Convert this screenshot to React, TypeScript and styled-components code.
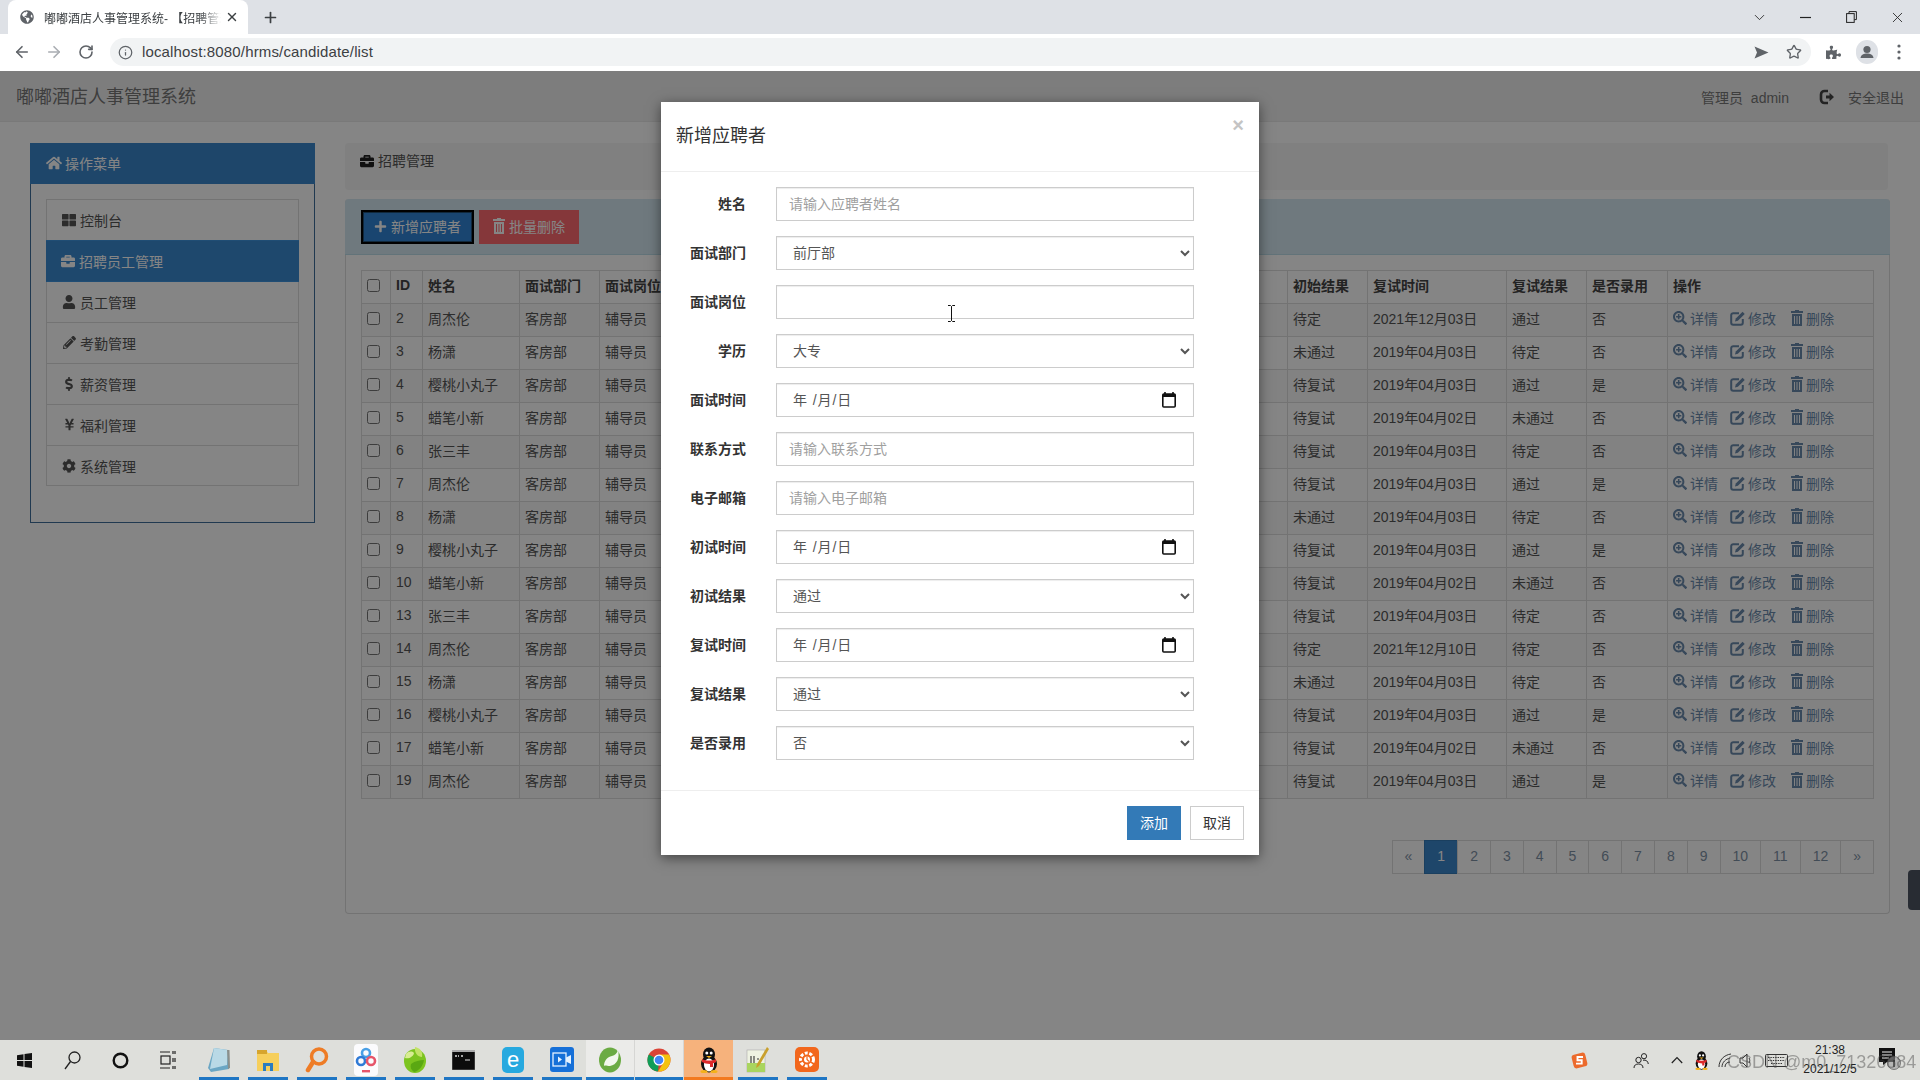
import React from "react";
import styled, { createGlobalStyle } from "styled-components";
import { ArrowLeft, ArrowRight, RotateCw, Info, Star, Plus, X, ChevronDown } from "lucide-react";
import {
  FaHome, FaThLarge, FaBriefcase, FaUser, FaPencilAlt, FaDollarSign, FaYenSign, FaCog,
  FaPlus, FaSearchPlus, FaPuzzlePiece, FaGlobeAmericas,
} from "react-icons/fa";

const FONT = `"Liberation Sans", "Noto Sans CJK SC", sans-serif`;

const Global = createGlobalStyle`
  html, body { margin: 0; padding: 0; width: 1920px; height: 1080px; overflow: hidden; }
  body { font-family: ${FONT}; font-size: 14px; color: #333; background: #fff; }
  * { box-sizing: border-box; }
`;

const Shell = styled.div`
  width: 1920px; height: 1080px; display: flex; flex-direction: column;
`;

/* ---------- browser chrome ---------- */
const TabStrip = styled.div`
  height: 34px; background: #dee1e6; display: flex; align-items: stretch; padding-left: 8px; flex: none;
`;
const Tab = styled.div`
  width: 240px; background: #fff; border-radius: 8px 8px 0 0; display: flex; align-items: center;
  padding: 0 9px 0 12px; color: #3c4043; font-size: 12px;
`;
const TabTitle = styled.span`
  flex: 1; margin-left: 10px; white-space: nowrap; overflow: hidden;
  -webkit-mask-image: linear-gradient(90deg, #000 86%, transparent 98%);
  mask-image: linear-gradient(90deg, #000 86%, transparent 98%);
`;
const NewTab = styled.div`
  width: 44px; display: flex; align-items: center; justify-content: center; color: #3c4043;
`;
const WindowButtons = styled.div`
  margin-left: auto; display: flex; align-items: center; color: #222;
`;
const WindowButton = styled.div`
  width: 46px; height: 28px; display: flex; align-items: center; justify-content: center;
`;
const Toolbar = styled.div`
  height: 37px; background: #fff; display: flex; align-items: center; padding: 0 0 1px 6px; flex: none;
`;
const NavButton = styled.div<{ $off?: boolean }>`
  width: 32px; height: 28px; display: flex; align-items: center; justify-content: center;
  color: ${(p) => (p.$off ? "#a9adb2" : "#5f6368")};
`;
const Omnibox = styled.div`
  width: 1701px; height: 28px; margin-left: 8px; border-radius: 14px; background: #f1f3f4;
  display: flex; align-items: center; padding: 0 9px 0 8px; color: #5f6368;
`;
const Url = styled.span`
  margin: -2px 0 0 9px; font-size: 15px; color: #3c4043; letter-spacing: 0.15px;
`;
const OmniActions = styled.div`
  margin-left: auto; display: flex; align-items: center; gap: 17px;
`;
const ExtActions = styled.div`
  margin-left: 15px; display: flex; align-items: center; gap: 15px; color: #5f6368;
`;
const MenuDots = styled.span`
  display: flex; margin-left: 4px;
`;

/* ---------- page ---------- */
const Stage = styled.div`
  flex: 1; position: relative; overflow: hidden; background: #fff; min-height: 0;
`;
const Navbar = styled.div`
  height: 51px; background: #f0f0f0; border-bottom: 1px solid #e8e8e8; display: flex; align-items: center;
  padding: 0 16px 0 16px; color: #666;
`;
const Brand = styled.div`
  font-size: 18px; color: #777; margin-top: -2px;
`;
const NavRight = styled.div`
  margin-left: auto; display: flex; align-items: center; font-size: 14px; color: #777; padding-top: 1px;
`;
const Logout = styled.span`
  margin-left: 30px; margin-right: 13px; display: flex;
`;
const Content = styled.div`
  display: flex; gap: 30px; padding: 21px 30px 0;
`;
const SidePanel = styled.div`
  width: 285px; height: 380px; border: 1px solid #3f6d99; flex: none;
`;
const SideHeading = styled.div`
  height: 41px; margin: -1px -1px 0; background: #3a86cc; color: #fff; display: flex; align-items: center;
  padding: 0 15px 2px 16px; gap: 3px;
`;
const SideBody = styled.div`
  padding: 15px;
`;
const MenuList = styled.div`
  border: 1px solid #ddd; border-top: none; border-bottom: none;
`;
const MenuItem = styled.div<{ $active?: boolean }>`
  padding: 0 15px; display: flex; align-items: center; gap: 4px;
  border-top: 1px solid ${(p) => (p.$active ? "#3f95de" : "#ddd")};
  border-bottom: 1px solid ${(p) => (p.$active ? "#3f95de" : "transparent")};
  margin: ${(p) => (p.$active ? "0 -1px -1px" : "0")};
  height: ${(p) => (p.$active ? "42px" : "41px")};
  position: ${(p) => (p.$active ? "relative" : "static")};
  background: ${(p) => (p.$active ? "#3a8ad2" : "#fff")};
  color: ${(p) => (p.$active ? "#fff" : "#555")};
  &:last-child { border-bottom: 1px solid #ddd; }
`;
const MenuGlyph = styled.span`
  width: 14px; display: flex; justify-content: center; flex: none;
`;
const Main = styled.div`
  width: 1545px; flex: none;
`;
const Crumb = styled.div`
  height: 47px; padding: 8px 15px 0; background: #f6f6f6; border-radius: 4px; margin-right: 2px; margin-bottom: 9px;
  display: flex; align-items: flex-start; gap: 4px; color: #555; line-height: 20px;
`;
const CrumbIcon = styled.span`
  display: flex; height: 20px; align-items: center;
`;
const Panel = styled.div`
  height: 715px; border: 1px solid #ddd; border-top: none; border-radius: 4px; background: #fff;
`;
const PanelHead = styled.div`
  height: 56px; margin: 0 -1px; background: #d5e8f1; border-bottom: 1px solid #bcdde8; border-radius: 4px 4px 0 0;
  display: flex; gap: 5px; padding: 11px 15px 0 16px;
`;
const PrimaryButton = styled.div`
  width: 113px; height: 34px; background: #3184d6; color: #fff; border: 1px solid #dce8f0; outline: 2px solid #000; outline-offset: -2px;
  display: flex; align-items: center; justify-content: center; gap: 4px; box-shadow: inset 0 0 0 2px #204d74; padding-bottom: 2px;
`;
const DangerButton = styled.div`
  width: 100px; height: 34px; background: #ff6a70; color: #fff; display: flex; align-items: center; justify-content: center; gap: 4px; padding-bottom: 2px;
`;
const PanelBody = styled.div`
  padding: 15px;
`;
const Table = styled.table`
  width: 1512px; table-layout: fixed; border-collapse: collapse; font-size: 14px; color: #555;
`;
const HeadCell = styled.th`
  height: 33px; border: 1px solid #ddd; text-align: left; padding: 0 5px 4px; font-weight: bold; color: #444; white-space: nowrap; overflow: hidden;
`;
const Cell = styled.td`
  height: 33px; border: 1px solid #ddd; padding: 0 5px 4px; white-space: nowrap; overflow: hidden;
`;
const Row = styled.tr<{ $odd: boolean }>`
  background: ${(p) => (p.$odd ? "#f9f9f9" : "#fff")};
`;
const Check = styled.input`
  margin: 0; width: 13px; height: 13px; display: block;
`;
const Ops = styled.div`
  display: flex; align-items: center; color: #6a8aac;
`;
const Op = styled.span`
  display: flex; align-items: center; gap: 3px; margin-right: 12px;
  &:nth-child(2) { margin-right: 15px; }
`;
const Pager = styled.div`
  display: flex; justify-content: flex-end; margin-top: 41px; padding-right: 0;
`;
const PageLink = styled.div<{ $active?: boolean }>`
  height: 34px; padding: 0 12px; margin-left: -1px; line-height: 30px; border: 1px solid ${(p) => (p.$active ? "#337ab7" : "#ddd")};
  background: ${(p) => (p.$active ? "#3a86cc" : "#fff")}; color: ${(p) => (p.$active ? "#fff" : "#7f92a6")}; position: relative;
`;
const SideTab = styled.div`
  position: absolute; right: 0; top: 799px; width: 12px; height: 40px; background: #4d5562; border-radius: 4px 0 0 4px;
`;

/* ---------- modal ---------- */
const Backdrop = styled.div`
  position: absolute; inset: 0; background: rgba(0, 0, 0, 0.48); display: flex; justify-content: center; padding-top: 31px; padding-right: 0;
`;
const Modal = styled.div`
  position: relative; width: 598px; height: 753px; background: #fff; box-shadow: 0 3px 12px rgba(0, 0, 0, 0.5);
`;
const ModalHead = styled.div`
  height: 70px; padding: 0 15px 6px 15px; display: flex; align-items: center; justify-content: space-between;
  border-bottom: 1px solid #eee;
`;
const ModalTitle = styled.div`
  font-size: 18px; color: #333;
`;
const Close = styled.div`
  color: #c4c4c4; font-weight: bold; font-size: 20px; line-height: 1; margin-top: -17px; margin-right: 0;
`;
const ModalBody = styled.div`
  height: 619px; padding: 15px 0 0 15px; border-bottom: 1px solid #eee;
`;
const FormRow = styled.div`
  display: grid; grid-template-columns: 70px 418px; column-gap: 30px; margin-bottom: 15px; align-items: center;
`;
const Label = styled.label`
  text-align: right; font-weight: bold; color: #333; font-size: 14px; white-space: nowrap; padding: 0 0 2px 1px;
`;
const TextInput = styled.input`
  height: 34px; width: 418px; border: 1px solid #ccc; padding: 0 12px; font: 14px ${FONT}; color: #555; background: #fff;
  box-shadow: inset 0 1px 1px rgba(0, 0, 0, 0.075); outline: none;
  &::placeholder { color: #a0a0a0; opacity: 1; }
`;
const Select = styled.select`
  height: 34px; width: 418px; border: 1px solid #ccc; padding: 0 12px; font: 14px ${FONT}; color: #555; background: #fff;
  box-shadow: inset 0 1px 1px rgba(0, 0, 0, 0.075); outline: none; border-radius: 0;
`;
const DateBox = styled.div`
  height: 34px; width: 418px; border: 1px solid #ccc; padding: 0 17px 0 16px; display: flex; align-items: center; justify-content: space-between;
  color: #555; box-shadow: inset 0 1px 1px rgba(0, 0, 0, 0.075);
`;
const DateText = styled.span`
  letter-spacing: 0.9px; margin-top: -2px;
`;
const ModalFoot = styled.div`
  height: 64px; display: flex; justify-content: flex-end; align-items: flex-start; gap: 9px; padding: 15px 15px 0 0;
`;
const AddButton = styled.div`
  width: 54px; height: 34px; background: #337ab7; color: #fff; display: flex; align-items: center; justify-content: center; padding-bottom: 2px;
`;
const CancelButton = styled.div`
  width: 54px; height: 34px; background: #fff; color: #333; border: 1px solid #ccc; display: flex; align-items: center; justify-content: center; padding-bottom: 2px;
`;
const IBeam = styled.svg`
  position: absolute; left: 286px; top: 203px;
`;

/* ---------- taskbar ---------- */
const Taskbar = styled.div`
  height: 40px; background: #dedfdb; display: flex; align-items: stretch; flex: none; position: relative;
`;
const SysSlots = styled.div`
  width: 194px; display: flex; align-items: stretch;
`;
const SysSlot = styled.div`
  width: 48px; display: flex; align-items: center; justify-content: center;
`;
const AppSlot = styled.div<{ $kind?: "open" | "focus" | "hot" }>`
  width: 49px; display: flex; align-items: center; justify-content: center; padding-bottom: 1px;
  background-color: ${(p) => (p.$kind === "hot" ? "#f6b27c" : p.$kind === "open" ? "#ebebe9" : "transparent")};
  background-image: linear-gradient(${(p) => (p.$kind === "hot" ? "#f37a1f, #f37a1f" : "#1f76c4, #1f76c4")});
  background-repeat: no-repeat; background-position: center bottom;
  background-size: ${(p) => (p.$kind ? "100% 3px" : "40px 3px")};
  border-right: ${(p) => (p.$kind === "open" ? "1px solid #d6d6d4" : "none")};
`;
const Tray = styled.div`
  margin-left: auto; display: flex; align-items: center; padding-right: 18px;
`;
const TrayItem = styled.div<{ $w: number; $ml?: number }>`
  width: ${(p) => p.$w}px; margin-left: ${(p) => p.$ml ?? 0}px; display: flex; align-items: center; justify-content: center;
`;
const Clock = styled.div`
  width: 60px; margin-left: 9px; margin-right: 18px; text-align: center; font-size: 12px; line-height: 19px; color: #222;
`;
const Watermark = styled.div`
  position: absolute; left: 1727px; top: 10px; font-size: 18px; line-height: 24px; color: rgba(70, 70, 70, 0.45); white-space: nowrap;
  filter: blur(0.4px);
`;

/* ---------- drawings ---------- */
const LogoutIcon = () => (
  <svg width="16" height="16" viewBox="0 0 16 16">
    <path d="M9 2H5.5A3.5 3.5 0 0 0 2 5.5v5A3.5 3.5 0 0 0 5.5 14H9" fill="none" stroke="#444" strokeWidth="2.6" />
    <path d="M7 6.5h3.5V3.8L15 8l-4.5 4.2V9.5H7z" fill="#444" />
  </svg>
);
const SendIcon = () => (
  <svg width="15" height="15" viewBox="0 0 15 15"><path d="M0.5 1.5 14.5 7.5 0.5 13.5 3 7.5z" fill="#5f6368" /></svg>
);
const Avatar = () => (
  <svg width="22" height="24" viewBox="0 0 22 24">
    <rect x="0" y="0" width="22" height="24" rx="11" fill="#dee1e6" />
    <circle cx="11" cy="9.5" r="3.6" fill="#5f6368" />
    <path d="M4.5 18c.5-3.5 3.5-4.5 6.5-4.5s6 1 6.5 4.5z" fill="#5f6368" />
  </svg>
);
const Dots = () => (
  <svg width="4" height="16" viewBox="0 0 4 16"><circle cx="2" cy="2" r="1.6" fill="#5f6368" /><circle cx="2" cy="8" r="1.6" fill="#5f6368" /><circle cx="2" cy="14" r="1.6" fill="#5f6368" /></svg>
);
const Minimize = () => (<svg width="11" height="11" viewBox="0 0 11 11"><path d="M0 5.5h11" stroke="#222" strokeWidth="1.2" /></svg>);
const Restore = () => (
  <svg width="11" height="12" viewBox="0 0 11 12"><rect x="0.6" y="2.6" width="7.6" height="8.8" fill="none" stroke="#222" /><path d="M3 2.5V.6h7.4v8H8.4" fill="none" stroke="#222" /></svg>
);
const Calendar = () => (
  <svg width="14" height="16" viewBox="0 0 14 16">
    <path d="M3 0v2M11 0v2" stroke="#111" strokeWidth="1.6" />
    <rect x="0.8" y="2" width="12.4" height="13" rx="1" fill="none" stroke="#111" strokeWidth="1.6" />
    <rect x="0.8" y="2" width="12.4" height="3" fill="#111" />
  </svg>
);
const TrashGlyph = ({ color = "currentColor" }: { color?: string }) => (
  <svg width="12" height="16" viewBox="0 0 12 16" fill={color}>
    <path d="M4 0h4v1h4v2H0V1h4z" />
    <path d="M1 4h10v12H1zM3 6v8h1V6zM5.5 6v8h1V6zM8 6v8h1V6z" fillRule="evenodd" />
  </svg>
);
const EditGlyph = () => (
  <svg width="15" height="15" viewBox="0 0 15 15" fill="none">
    <path d="M9 2.2H3.2A2 2 0 0 0 1.2 4.2v7.6a2 2 0 0 0 2 2h7.6a2 2 0 0 0 2-2V8" stroke="currentColor" strokeWidth="2" />
    <path d="M5 10.5 5.8 7.6 12.6.8 14.7 2.9 7.9 9.7z" fill="currentColor" />
  </svg>
);
const WinLogo = () => (
  <svg width="15" height="15" viewBox="0 0 15 15" fill="#111"><path d="M0 2.2 6.5 1.2V7H0zM7.5 1 15 0v7H7.5zM0 8h6.5v5.8L0 12.8zM7.5 8H15v7l-7.5-1z" /></svg>
);
const SearchGlyph = () => (
  <svg width="17" height="19" viewBox="0 0 17 19" fill="none" stroke="#222" strokeWidth="1.3"><circle cx="10.5" cy="6.5" r="5.5" /><path d="M6.5 10.5 1 18" /></svg>
);
const Cortana = () => (
  <svg width="17" height="17" viewBox="0 0 17 17"><circle cx="8.5" cy="8.5" r="6.8" fill="none" stroke="#111" strokeWidth="2.4" /></svg>
);
const TaskView = () => (
  <svg width="16" height="18" viewBox="0 0 16 18" fill="none" stroke="#222" strokeWidth="1.2">
    <path d="M0 1h10M0 17h10M13 0v3M13 7v4M13 15v3M15 0v3M15 7v4M15 15v3" /><rect x="1" y="5" width="9" height="8" />
  </svg>
);
const NotepadApp = () => (
  <svg width="24" height="26" viewBox="0 0 24 26">
    <path d="M7 1 21 3 22 22 4 25 1 21z" fill="#6aa6c4" />
    <path d="M7 1 21 3 20 18 3 22z" fill="#b9d9e6" />
    <path d="M20 3h2.5l.5 18-2 1z" fill="#8a8f8c" />
  </svg>
);
const FolderApp = () => (
  <svg width="24" height="24" viewBox="0 0 24 24">
    <path d="M1 2h9l2 3h11v18H1z" fill="#f6cf5c" /><rect x="1" y="2" width="10" height="4" fill="#d6a52e" />
    <path d="M7 15h10v8h-3v-5h-4v5H7z" fill="#2a7cc0" />
  </svg>
);
const SearchApp = () => (
  <svg width="24" height="26" viewBox="0 0 24 26" fill="none">
    <circle cx="14" cy="9.5" r="7.5" stroke="#ee7c25" strokeWidth="3.5" />
    <path d="M8 15 3 23" stroke="#ee7c25" strokeWidth="4.5" strokeLinecap="round" />
  </svg>
);
const NetDisk = () => (
  <svg width="24" height="32" viewBox="0 0 24 32">
    <rect width="24" height="32" rx="4" fill="#fbfbfd" />
    <g fill="none" strokeWidth="2.6"><circle cx="12" cy="9" r="4" stroke="#4aa0e6" /><circle cx="7" cy="17" r="4" stroke="#2f7ad6" /><circle cx="17" cy="17" r="4" stroke="#e6556a" /></g>
    <rect x="8" y="26" width="8" height="2.4" fill="#e6556a" />
  </svg>
);
const LeafBall = () => (
  <svg width="24" height="28" viewBox="0 0 24 28">
    <ellipse cx="12" cy="15" rx="11" ry="12" fill="#7cc41f" />
    <path d="M12 1c5 1 8 4 7 10-4 0-8-4-7-10z" fill="#c2e266" /><path d="M3 8c3-3 6-3 8-1-1 4-5 6-9 5z" fill="#d8ec93" />
    <path d="M8 18c4-3 9-4 13-4-1 6-5 11-10 12-3-2-4-5-3-8z" fill="#5aa812" />
  </svg>
);
const Cmd = () => (
  <svg width="23" height="20" viewBox="0 0 23 20">
    <rect width="23" height="20" fill="#0c0c0c" stroke="#999" strokeWidth=".6" /><rect y="0" width="23" height="2" fill="#aaa" />
    <path d="M3 6h2M6 6h1M9 6h2" stroke="#ddd" strokeWidth="1.5" /><path d="M13 10h5" stroke="#ddd" strokeWidth="1" />
  </svg>
);
const EdgeApp = () => (
  <svg width="22" height="26" viewBox="0 0 22 26">
    <rect width="22" height="26" rx="5" fill="#27a9df" />
    <text x="11" y="20" textAnchor="middle" fontFamily={FONT} fontSize="22" fill="#fff">e</text>
  </svg>
);
const VideoApp = () => (
  <svg width="24" height="25" viewBox="0 0 24 25" fill="none">
    <rect width="24" height="25" rx="3" fill="#1670d8" />
    <rect x="3" y="6" width="13" height="13" stroke="#e6f2ff" strokeWidth="1.3" />
    <path d="M16 10.5 21 8v9l-5-2.5M8 9.5l4 3-4 3z" fill="#e6f2ff" />
  </svg>
);
const SpringApp = () => (
  <svg width="24" height="26" viewBox="0 0 24 26">
    <ellipse cx="12" cy="13" rx="11" ry="12.5" fill="#6bab43" />
    <path d="M20 3c2 8-1 15-8 16-3 0-5-1-6 0 0-5 3-9 8-10 3-.5 5-3 6-6z" fill="#f2f7ec" />
  </svg>
);
const ChromeApp = () => (
  <svg width="24" height="24" viewBox="0 0 24 24">
    <circle cx="12" cy="12" r="11.5" fill="#db4437" />
    <path d="M12 12 1.8 6.5A11.5 11.5 0 0 0 11 23.5z" fill="#0f9d58" />
    <path d="M12 6.5h10A11.5 11.5 0 0 1 11 23.5l5.5-9z" fill="#f4c20d" />
    <circle cx="12" cy="12" r="5.5" fill="#fff" /><circle cx="12" cy="12" r="4.3" fill="#4285f4" />
  </svg>
);
const Penguin = ({ w = 20, h = 26 }: { w?: number; h?: number }) => (
  <svg width={w} height={h} viewBox="0 0 20 26">
    <ellipse cx="10" cy="7.5" rx="6" ry="7" fill="#111" />
    <ellipse cx="10" cy="17" rx="8" ry="8.5" fill="#111" />
    <ellipse cx="10" cy="18" rx="5" ry="6.5" fill="#fff" />
    <circle cx="7.8" cy="6" r="1.5" fill="#fff" /><circle cx="12.2" cy="6" r="1.5" fill="#fff" />
    <path d="M7 9h6l-3 2z" fill="#f5b21a" />
    <path d="M3 12c4 2 10 2 14 0v3c-1 1-2 1-3 1v4h-3v-3c-3 0-6-1-8-2z" fill="#dc2a2a" />
    <ellipse cx="5" cy="24.5" rx="3.5" ry="1.5" fill="#f5b21a" /><ellipse cx="15" cy="24.5" rx="3.5" ry="1.5" fill="#f5b21a" />
  </svg>
);
const NppApp = () => (
  <svg width="24" height="26" viewBox="0 0 24 26">
    <rect x="1" y="3" width="18" height="22" fill="#eef2e2" stroke="#aaa" strokeWidth=".6" />
    <rect x="1" y="16" width="18" height="9" fill="#a9d55f" />
    <path d="M5 9v7M8 9v7M11 12h2M15 12h1" stroke="#333" strokeWidth="1.1" />
    <path d="M21 0 23 2 13 19 10 21 11 17z" fill="#c9a02c" />
  </svg>
);
const GearApp = () => (
  <svg width="24" height="25" viewBox="0 0 24 25">
    <rect width="24" height="25" rx="5" fill="#f2671c" />
    <circle cx="12" cy="12.5" r="6.5" fill="none" stroke="#fff" strokeWidth="3" strokeDasharray="3 1.6" />
    <circle cx="12" cy="12.5" r="3" fill="#fff" />
    <path d="M12 9.5v3l2 2" stroke="#f2671c" strokeWidth="1.2" fill="none" />
  </svg>
);
const Sogou = () => (
  <svg width="17" height="17" viewBox="0 0 17 17">
    <rect x="1.5" y="1.5" width="14" height="14" rx="3" fill="#ec6a2c" transform="rotate(-14 8.5 8.5)" />
    <path d="M12 5H6.5v3.2h4.2v3.4H5" fill="none" stroke="#fff" strokeWidth="1.9" />
  </svg>
);
const People = () => (
  <svg width="16" height="15" viewBox="0 0 16 15" fill="none" stroke="#222" strokeWidth="1">
    <circle cx="5.5" cy="7" r="2.7" /><path d="M1 15c0-3 2-4 4.5-4S10 12 10 15" /><circle cx="11" cy="3.2" r="2.6" /><path d="M10 7.2c3-.6 5 1 5.3 3.8" />
  </svg>
);
const Caret = () => (
  <svg width="12" height="8" viewBox="0 0 12 8" fill="none" stroke="#222" strokeWidth="1.2"><path d="M.8 7 6 1.5 11.2 7" /></svg>
);
const Wifi = () => (
  <svg width="16" height="14" viewBox="0 0 16 14" fill="none" stroke="#333" strokeWidth="1"><path d="M1 14C1 7 6 2 13 1M4 14c0-5 4-8 8-9M7 14c0-3 2-5 5-5" /></svg>
);
const Speaker = () => (
  <svg width="14" height="15" viewBox="0 0 14 15" fill="none" stroke="#333" strokeWidth="1"><path d="M1 5h3l4-4v13l-4-4H1zM10 5c1 1.5 1 3.5 0 5" /></svg>
);
const Keyboard = () => (
  <svg width="23" height="13" viewBox="0 0 23 13" fill="none" stroke="#333" strokeWidth="1">
    <rect x=".5" y=".5" width="22" height="12" rx="1" /><path d="M3 3.5h17M3 6.5h17M6 9.5h11" strokeDasharray="1.4 1" />
  </svg>
);
const Notify = () => (
  <svg width="22" height="24" viewBox="0 0 22 24">
    <path d="M0 0h16v14H8l-4 3v-3H0z" fill="#111" /><path d="M3 4h10M3 7h10M3 10h7" stroke="#eee" />
    <circle cx="15" cy="15" r="6.5" fill="#9b9b9b" fillOpacity=".6" stroke="#555" strokeWidth=".7" />
    <path d="M15 12v7" stroke="#222" strokeWidth="1.2" />
  </svg>
);

/* ---------- data ---------- */
const rows = [
  [2, "周杰伦", "待定", "2021年12月03日", "通过", "否"],
  [3, "杨潇", "未通过", "2019年04月03日", "待定", "否"],
  [4, "樱桃小丸子", "待复试", "2019年04月03日", "通过", "是"],
  [5, "蜡笔小新", "待复试", "2019年04月02日", "未通过", "否"],
  [6, "张三丰", "待复试", "2019年04月03日", "待定", "否"],
  [7, "周杰伦", "待复试", "2019年04月03日", "通过", "是"],
  [8, "杨潇", "未通过", "2019年04月03日", "待定", "否"],
  [9, "樱桃小丸子", "待复试", "2019年04月03日", "通过", "是"],
  [10, "蜡笔小新", "待复试", "2019年04月02日", "未通过", "否"],
  [13, "张三丰", "待复试", "2019年04月03日", "待定", "否"],
  [14, "周杰伦", "待定", "2021年12月10日", "待定", "否"],
  [15, "杨潇", "未通过", "2019年04月03日", "待定", "否"],
  [16, "樱桃小丸子", "待复试", "2019年04月03日", "通过", "是"],
  [17, "蜡笔小新", "待复试", "2019年04月02日", "未通过", "否"],
  [19, "周杰伦", "待复试", "2019年04月03日", "通过", "是"],
] as const;

const menu = [
  { icon: <FaThLarge size={14} />, label: "控制台" },
  { icon: <FaBriefcase size={14} />, label: "招聘员工管理", active: true },
  { icon: <FaUser size={14} />, label: "员工管理" },
  { icon: <FaPencilAlt size={13} />, label: "考勤管理" },
  { icon: <FaDollarSign size={14} />, label: "薪资管理" },
  { icon: <FaYenSign size={13} />, label: "福利管理" },
  { icon: <FaCog size={14} />, label: "系统管理" },
];

const colWidths = [29, 32, 97, 80, 80, 152, 152, 152, 152, 80, 139, 80, 81, 206];
const pages = ["«", "1", "2", "3", "4", "5", "6", "7", "8", "9", "10", "11", "12", "»"];

type Field =
  | { kind: "text"; label: string; hint: string }
  | { kind: "select"; label: string; value: string; options: string[] }
  | { kind: "date"; label: string };

const fields: Field[] = [
  { kind: "text", label: "姓名", hint: "请输入应聘者姓名" },
  { kind: "select", label: "面试部门", value: "前厅部", options: ["前厅部", "客房部"] },
  { kind: "text", label: "面试岗位", hint: "" },
  { kind: "select", label: "学历", value: "大专", options: ["大专", "本科"] },
  { kind: "date", label: "面试时间" },
  { kind: "text", label: "联系方式", hint: "请输入联系方式" },
  { kind: "text", label: "电子邮箱", hint: "请输入电子邮箱" },
  { kind: "date", label: "初试时间" },
  { kind: "select", label: "初试结果", value: "通过", options: ["通过", "未通过"] },
  { kind: "date", label: "复试时间" },
  { kind: "select", label: "复试结果", value: "通过", options: ["通过", "未通过"] },
  { kind: "select", label: "是否录用", value: "否", options: ["否", "是"] },
];

const apps: { node: React.ReactNode; kind?: "open" | "hot" }[] = [
  { node: <NotepadApp /> }, { node: <FolderApp /> }, { node: <SearchApp /> }, { node: <NetDisk /> },
  { node: <LeafBall /> }, { node: <Cmd /> }, { node: <EdgeApp /> }, { node: <VideoApp /> },
  { node: <SpringApp />, kind: "open" }, { node: <ChromeApp />, kind: "open" }, { node: <Penguin />, kind: "hot" },
  { node: <NppApp /> }, { node: <GearApp /> },
];

export default function App() {
  return (
    <Shell>
      <Global />
      <TabStrip>
        <Tab>
          <FaGlobeAmericas size={14} color="#5f6368" />
          <TabTitle>嘟嘟酒店人事管理系统- 【招聘管理】</TabTitle>
          <X size={14} strokeWidth={2.4} />
        </Tab>
        <NewTab><Plus size={17} strokeWidth={2.4} /></NewTab>
        <WindowButtons>
          <WindowButton><ChevronDown size={17} strokeWidth={1.2} /></WindowButton>
          <WindowButton><Minimize /></WindowButton>
          <WindowButton><Restore /></WindowButton>
          <WindowButton><X size={17} strokeWidth={1.2} /></WindowButton>
        </WindowButtons>
      </TabStrip>
      <Toolbar>
        <NavButton><ArrowLeft size={18} strokeWidth={2.2} /></NavButton>
        <NavButton $off><ArrowRight size={18} strokeWidth={2.2} /></NavButton>
        <NavButton><RotateCw size={16} strokeWidth={2.4} /></NavButton>
        <Omnibox>
          <Info size={15} strokeWidth={2} />
          <Url>localhost:8080/hrms/candidate/list</Url>
          <OmniActions>
            <SendIcon />
            <Star size={16} strokeWidth={2} />
          </OmniActions>
        </Omnibox>
        <ExtActions>
          <FaPuzzlePiece size={15} />
          <Avatar />
          <MenuDots><Dots /></MenuDots>
        </ExtActions>
      </Toolbar>

      <Stage>
        <Navbar>
          <Brand>嘟嘟酒店人事管理系统</Brand>
          <NavRight>
            <span>管理员&nbsp;&nbsp;admin</span>
            <Logout><LogoutIcon /></Logout>
            <span>安全退出</span>
          </NavRight>
        </Navbar>
        <Content>
          <SidePanel>
            <SideHeading><FaHome size={16} />操作菜单</SideHeading>
            <SideBody>
              <MenuList>
                {menu.map((m) => (
                  <MenuItem key={m.label} $active={m.active}>
                    <MenuGlyph>{m.icon}</MenuGlyph>{m.label}
                  </MenuItem>
                ))}
              </MenuList>
            </SideBody>
          </SidePanel>
          <Main>
            <Crumb><CrumbIcon><FaBriefcase size={14} color="#222" /></CrumbIcon>招聘管理</Crumb>
            <Panel>
              <PanelHead>
                <PrimaryButton><FaPlus size={13} />新增应聘者</PrimaryButton>
                <DangerButton><TrashGlyph />批量删除</DangerButton>
              </PanelHead>
              <PanelBody>
                <Table>
                  <colgroup>
                    {colWidths.map((w, i) => <col key={i} width={w} />)}
                  </colgroup>
                  <thead>
                    <tr>
                      <HeadCell><Check type="checkbox" readOnly /></HeadCell>
                      <HeadCell>ID</HeadCell>
                      <HeadCell>姓名</HeadCell>
                      <HeadCell>面试部门</HeadCell>
                      <HeadCell>面试岗位</HeadCell>
                      <HeadCell>面试时间</HeadCell>
                      <HeadCell>联系方式</HeadCell>
                      <HeadCell>电子邮箱</HeadCell>
                      <HeadCell>初试时间</HeadCell>
                      <HeadCell>初始结果</HeadCell>
                      <HeadCell>复试时间</HeadCell>
                      <HeadCell>复试结果</HeadCell>
                      <HeadCell>是否录用</HeadCell>
                      <HeadCell>操作</HeadCell>
                    </tr>
                  </thead>
                  <tbody>
                    {rows.map((r, i) => (
                      <Row key={r[0]} $odd={i % 2 === 0}>
                        <Cell><Check type="checkbox" readOnly /></Cell>
                        <Cell>{r[0]}</Cell>
                        <Cell>{r[1]}</Cell>
                        <Cell>客房部</Cell>
                        <Cell>辅导员</Cell>
                        <Cell /><Cell /><Cell /><Cell />
                        <Cell>{r[2]}</Cell>
                        <Cell>{r[3]}</Cell>
                        <Cell>{r[4]}</Cell>
                        <Cell>{r[5]}</Cell>
                        <Cell>
                          <Ops>
                            <Op><FaSearchPlus size={14} />详情</Op>
                            <Op><EditGlyph />修改</Op>
                            <Op><TrashGlyph />删除</Op>
                          </Ops>
                        </Cell>
                      </Row>
                    ))}
                  </tbody>
                </Table>
                <Pager>
                  {pages.map((p) => <PageLink key={p} $active={p === "1"}>{p}</PageLink>)}
                </Pager>
              </PanelBody>
            </Panel>
          </Main>
        </Content>
        <SideTab />
        <Backdrop>
          <Modal>
            <ModalHead>
              <ModalTitle>新增应聘者</ModalTitle>
              <Close>×</Close>
            </ModalHead>
            <ModalBody>
              {fields.map((f) => (
                <FormRow key={f.label}>
                  <Label>{f.label}</Label>
                  {f.kind === "text" && <TextInput placeholder={f.hint} readOnly />}
                  {f.kind === "select" && (
                    <Select defaultValue={f.value}>
                      {f.options.map((o) => <option key={o}>{o}</option>)}
                    </Select>
                  )}
                  {f.kind === "date" && <DateBox><DateText>年 /月/日</DateText><Calendar /></DateBox>}
                </FormRow>
              ))}
            </ModalBody>
            <ModalFoot>
              <AddButton>添加</AddButton>
              <CancelButton>取消</CancelButton>
            </ModalFoot>
            <IBeam width="9" height="17" viewBox="0 0 9 17" fill="none" stroke="#111" strokeWidth="1">
              <path d="M1 .5h2.5l1 1 1-1H8M4.5 1.5v14M1 16.5h2.5l1-1 1 1H8" />
            </IBeam>
          </Modal>
        </Backdrop>
      </Stage>

      <Taskbar>
        <SysSlots>
          <SysSlot><WinLogo /></SysSlot>
          <SysSlot><SearchGlyph /></SysSlot>
          <SysSlot><Cortana /></SysSlot>
          <SysSlot><TaskView /></SysSlot>
        </SysSlots>
        {apps.map((a, i) => <AppSlot key={i} $kind={a.kind}>{a.node}</AppSlot>)}
        <Tray>
          <TrayItem $w={24}><Sogou /></TrayItem>
          <TrayItem $w={24} $ml={38}><People /></TrayItem>
          <TrayItem $w={24} $ml={12}><Caret /></TrayItem>
          <TrayItem $w={24}><Penguin w={15} h={19} /></TrayItem>
          <TrayItem $w={20} $ml={3}><Wifi /></TrayItem>
          <TrayItem $w={20}><Speaker /></TrayItem>
          <TrayItem $w={30} $ml={5}><Keyboard /></TrayItem>
          <Clock>21:38<br />2021/12/5</Clock>
          <TrayItem $w={24}><Notify /></TrayItem>
        </Tray>
        <Watermark>CSDN @m0_71326884</Watermark>
      </Taskbar>
    </Shell>
  );
}
